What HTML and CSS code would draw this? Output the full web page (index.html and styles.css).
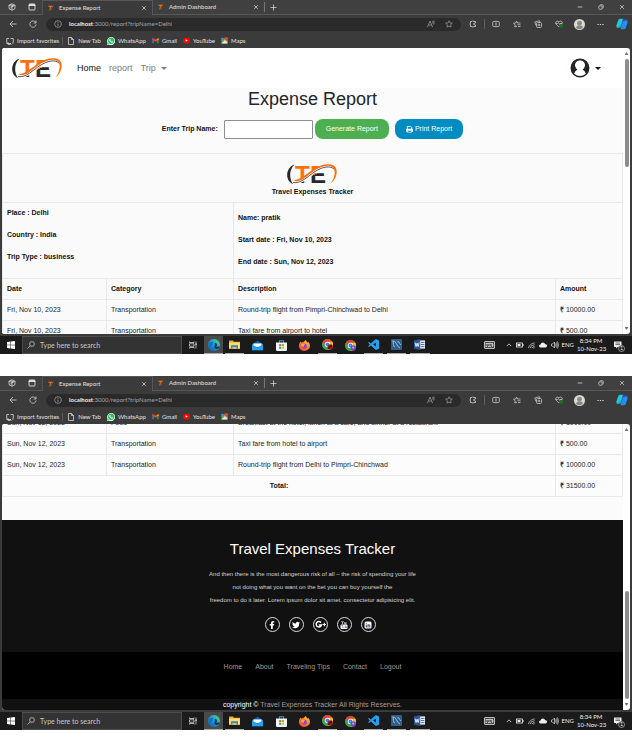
FILE: index.html
```html
<!DOCTYPE html>
<html lang="en">
<head>
<meta charset="utf-8">
<meta name="viewport" content="width=device-width, initial-scale=1">
<title>Expense Report</title>
<link rel="stylesheet" href="styles.css">
</head>
<body>
<svg class="sprite" aria-hidden="true">
  <defs>
    <linearGradient id="te-fill" gradientUnits="userSpaceOnUse" x1="22" y1="0" x2="32" y2="21"><stop offset=".56" stop-color="#ff6f0f"/><stop offset=".56" stop-color="#26282c"/></linearGradient>
    <linearGradient id="edge-fill" x1="0" y1="1" x2="1" y2="0"><stop offset="0" stop-color="#0c59a4"/><stop offset=".5" stop-color="#1b9de2"/><stop offset="1" stop-color="#5fe05a"/></linearGradient>
    <linearGradient id="copilot-fill" x1="0" y1="0" x2="1" y2="1"><stop offset="0" stop-color="#1fa3ff"/><stop offset=".5" stop-color="#22d3c5"/><stop offset="1" stop-color="#2b62f0"/></linearGradient>
    <linearGradient id="fox-fill" x1="0" y1="1" x2="1" y2="0"><stop offset="0" stop-color="#ff3647"/><stop offset=".5" stop-color="#ff7a1e"/><stop offset="1" stop-color="#ffe14a"/></linearGradient>
  </defs>
  <symbol id="logo" viewBox="0 0 51 22">
    <text class="logo-type" x="8" y="20" fill="url(#te-fill)">T</text>
    <text class="logo-type" x="23" y="20" fill="url(#te-fill)">E</text>
    <path d="M5 19C14 22 21 13 28 8.500C36 3.500 43 2.500 47 6" fill="none" stroke="#fff" stroke-width="2.500"/>
    <path d="M7.500 1.500C-2 5-2 18 6 21C2 15 2 7 7.500 1.500Z" fill="#26282c"/>
    <path d="M6 19.500C14 21 21 13 28 8.500C36 3.500 43 2.500 47 6" fill="none" stroke="#26282c" stroke-width=".8"/>
    <path d="M6 17C12 18 19 11 26 6.500C36 0 48-1 49.500 7C50.500 13 47 18 43.500 20.500C47 16 49.500 9 46 4.500C40 0 30 5 24 10C16 17 10 20 6 17Z" fill="#ff6f0f"/>
  </symbol>
  <symbol id="favicon" viewBox="0 0 12 12"><path d="M1 1.500h9L8.500 4H6L4.500 11H2.500L4 4H1Z" fill="#f07018"/><path d="M7 5l4-3-1 3-2 1v4H6Z" fill="#8a4a20"/></symbol>
  <symbol id="workspaces" viewBox="0 0 16 16"><path d="M8 1.500l6 2.800v7L8 14.500l-6-3.200v-7ZM2 4.300L8 7l6-2.700M8 7v7.500M5 3l6 2.700M5 10l6-5" fill="none" stroke="currentColor" stroke-width="1.500"/></symbol>
  <symbol id="tabs" viewBox="0 0 16 16"><rect x="2" y="2" width="12" height="12" rx="2" fill="none" stroke="currentColor" stroke-width="1.800"/><path d="M2 2h12v4H2Z" fill="currentColor"/></symbol>
  <symbol id="close" viewBox="0 0 16 16"><path d="M3 3l10 10M13 3L3 13" stroke="currentColor" stroke-width="1.800"/></symbol>
  <symbol id="plus" viewBox="0 0 16 16"><path d="M8 1v14M1 8h14" stroke="currentColor" stroke-width="1.600"/></symbol>
  <symbol id="minimize" viewBox="0 0 16 16"><path d="M2 8h12" stroke="currentColor" stroke-width="2"/></symbol>
  <symbol id="restore" viewBox="0 0 16 16"><rect x="2" y="5" width="9" height="9" rx="2" fill="none" stroke="currentColor" stroke-width="1.800"/><path d="M5 4q0-2 2-2h5q2 0 2 2v5q0 2-2 2" fill="none" stroke="currentColor" stroke-width="1.800"/></symbol>
  <symbol id="back" viewBox="0 0 16 16"><path d="M15 8H2M8 2L2 8l6 6" fill="none" stroke="currentColor" stroke-width="1.600"/></symbol>
  <symbol id="reload" viewBox="0 0 16 16"><path d="M13.500 5A6.300 6.300 0 1 0 14.300 9M14 1v5H9" fill="none" stroke="currentColor" stroke-width="1.600"/></symbol>
  <symbol id="info" viewBox="0 0 16 16"><circle cx="8" cy="8" r="6.700" fill="none" stroke="currentColor" stroke-width="1.400"/><path d="M8 7v5M8 4v1.600" stroke="currentColor" stroke-width="1.600"/></symbol>
  <symbol id="read-aloud" viewBox="0 0 16 16"><path d="M1 14L6 2l5 12M3 10h6M11 2q2 2 0 5M13 1q3 4 0 8" fill="none" stroke="currentColor" stroke-width="1.400"/></symbol>
  <symbol id="star" viewBox="0 0 16 16"><path d="M8 1.500l2 4.300 4.700.6-3.500 3.200.9 4.700L8 12l-4.100 2.300.9-4.700L1.300 6.400 6 5.800Z" fill="none" stroke="currentColor" stroke-width="1.400"/></symbol>
  <symbol id="puzzle" viewBox="0 0 16 16"><path d="M3 3h3q1-3 4 0h3v3q-4 0-4 2t4 2v3h-3q-2 3-4 0H3v-3q-3-2 0-4Z" fill="none" stroke="currentColor" stroke-width="1.600"/></symbol>
  <symbol id="split" viewBox="0 0 16 16"><path d="M7 3H3q-1.500 0-1.500 1.500v7Q1.500 13 3 13h4M9 3h4q1.500 0 1.500 1.500v7Q14.500 13 13 13H9M8 1v14" fill="none" stroke="currentColor" stroke-width="1.500"/></symbol>
  <symbol id="favorites" viewBox="0 0 16 16"><path d="M15 6H9L7 2 5.500 6 1 6.500 4.500 9.500 3.500 14 8 12M9 9.500h6M10 13h5" fill="none" stroke="currentColor" stroke-width="1.500"/></symbol>
  <symbol id="collections" viewBox="0 0 16 16"><path d="M4 11L1.500 4 11 1.500l1 3" fill="none" stroke="currentColor" stroke-width="1.500"/><rect x="5" y="5" width="10" height="10" rx="2" fill="none" stroke="currentColor" stroke-width="1.500"/><path d="M10 7v6M7 10h6" stroke="currentColor" stroke-width="1.500"/></symbol>
  <symbol id="heart" viewBox="0 0 16 16"><path d="M8 14L2 8Q0 3 4 2q3 0 4 2 1-2 4-2 4 1 2 6ZM1 7h4l2-2 2 4 1-2h4" fill="none" stroke="currentColor" stroke-width="1.400"/><circle cx="12" cy="12" r="4" fill="#12751c"/></symbol>
  <symbol id="profile" viewBox="0 0 16 16"><circle cx="8" cy="8" r="8" fill="#dcdad7"/><circle cx="8" cy="6" r="3.500" fill="#8b8985"/><path d="M3 13q0-4 5-4t5 4q-5 4-10 0Z" fill="#8b8985"/></symbol>
  <symbol id="more" viewBox="0 0 16 16"><path d="M1 8h3M6.500 8h3M12 8h3" stroke="currentColor" stroke-width="2.400"/></symbol>
  <symbol id="copilot" viewBox="0 0 16 16"><path d="M5 1h4q1 0 .6 1.500L7 11q-.6 2-3 2H2Q0 13 .5 10L3 3q.6-2 2-2Z" fill="url(#copilot-fill)"/><path d="M12 3h2q2 0 1.500 3L13 13q-.6 2-2 2H7q-1 0-.6-1.500L9 5q.6-2 3-2Z" fill="#258df5"/><path d="M9 1h2q1.500 0 2 2h-1Q10 3 9 5L7 11Z" fill="#2447c9"/></symbol>
  <symbol id="import" viewBox="0 0 16 16"><path d="M6 3H1.500v10H9M9 3h5.500v8M4 10v5h5M8 12l3 3M12 12h3" fill="none" stroke="currentColor" stroke-width="1.500"/></symbol>
  <symbol id="page" viewBox="0 0 16 16"><path d="M3 1h6l4 4v10H3ZM9 1v4h4" fill="none" stroke="currentColor" stroke-width="1.500"/></symbol>
  <symbol id="whatsapp" viewBox="0 0 16 16"><path d="M0 16l1.200-4.200A8 8 0 1 1 4 14.800Z" fill="#fff"/><path d="M2 14l1-3A6.500 6.500 0 1 1 5 13Z" fill="#22c15c"/><path d="M5 4.500l1.500-.5L7.500 6.500l-.8.9q.8 1.500 2.200 2l1-1L12 9.500q0 2-2 2Q5.500 11 4.500 6.500Z" fill="#fff"/></symbol>
  <symbol id="gmail" viewBox="0 0 16 16"><path d="M1 3v11h3V6Z" fill="#4285f4"/><path d="M15 3v11h-3V6Z" fill="#34a853"/><path d="M1 3l2-1 5 4 5-4 2 1v3L8 11 1 6Z" fill="#ea4335"/><path d="M12 5l3-2v3l-3 2Z" fill="#fbbc04"/></symbol>
  <symbol id="youtube" viewBox="0 0 16 16"><rect y="2" width="16" height="12" rx="4" fill="#f00"/><path d="M6 5l5 3-5 3Z" fill="#fff"/></symbol>
  <symbol id="maps" viewBox="0 0 16 16"><path d="M1 2h14v13H1Z" fill="#34a853"/><path d="M1 15L13 3l2 12Z" fill="#dfe6ec"/><path d="M1 2h7L1 9Z" fill="#4285f4"/><path d="M2 13L12 3" stroke="#fbc21b" stroke-width="2"/><path d="M12 10Q8 6 8 4a4 4 0 0 1 8 0q0 2-4 6Z" fill="#ea4335"/></symbol>
  <symbol id="account" viewBox="0 0 20 20"><circle cx="10" cy="10" r="8.800" fill="#fff" stroke="#212529" stroke-width="1.400"/><path d="M4 16A8.800 8.800 0 1 1 16 16Q15 12.500 12.500 11.500A5 5 0 1 0 7.500 11.500Q5 12.500 4 16Z" fill="#212529"/><circle cx="10" cy="8" r="4" fill="#fff"/></symbol>
  <symbol id="printer" viewBox="0 0 16 16"><path d="M3 7V1h8l2 2v4" fill="none" stroke="currentColor" stroke-width="2"/><path d="M2 6h12q2 0 2 2v5h-3v-2H3v2H0V8q0-2 2-2Z" fill="currentColor"/><path d="M3.500 10.500v4h9v-4" fill="none" stroke="currentColor" stroke-width="1.500"/></symbol>
  <symbol id="windows" viewBox="0 0 16 16"><path d="M0 2l7-1v6.500H0ZM8 1l8-1v7.500H8ZM0 8.500h7V15l-7-1ZM8 8.500h8V16l-8-1Z" fill="#fff"/></symbol>
  <symbol id="search" viewBox="0 0 16 16"><circle cx="10" cy="6" r="4.800" fill="none" stroke="currentColor" stroke-width="1.500"/><path d="M6.500 9.500L1 15" stroke="currentColor" stroke-width="1.500"/></symbol>
  <symbol id="task-view" viewBox="0 0 16 16"><path d="M1 1v2h9V1M1 15v-2h9v2M1 5.500h9v5H1ZM14 1v14" fill="none" stroke="currentColor" stroke-width="1.400"/><path d="M13 5h2v3h-2Z" fill="currentColor"/></symbol>
  <symbol id="edge" viewBox="0 0 16 16"><circle cx="8" cy="8" r="8" fill="url(#edge-fill)"/><path d="M1 6Q4 2 8 4.500 5 6 5.500 10q1 4 6 5.200Q7 17 3 14-1 10 1 6Z" fill="#1173c7"/><path d="M9 8q1-1.500 0-3 3 0 3 3 0 1-1 2 3 1 5-1-1 4-4 4.500Q7 13 9 8Z" fill="#15334c"/></symbol>
  <symbol id="folder" viewBox="0 0 16 16"><path d="M0 2h6l1 2h9v10H0Z" fill="#e9a820"/><path d="M0 5h16v9H0Z" fill="#ffdc69"/><path d="M3 9h10v5h-2v-2H5v2H3Z" fill="#2f83cf"/></symbol>
  <symbol id="mail" viewBox="0 0 16 16"><path d="M0 6l8-5 8 5v9H0Z" fill="#0f62b5"/><path d="M2 5h12v5H2Z" fill="#fff"/><path d="M0 6l8 5 8-5v9H0Z" fill="#25a3ee"/></symbol>
  <symbol id="store" viewBox="0 0 16 16"><path d="M5 4V1h6v3" fill="none" stroke="#33a9e8" stroke-width="1.500"/><path d="M0 3.500h16V14q0 2-2 2H2q-2 0-2-2Z" fill="#f6f6f6"/><path d="M4.500 6h3v3h-3Z" fill="#f25022"/><path d="M8.500 6h3v3h-3Z" fill="#7fba00"/><path d="M4.500 10h3v3h-3Z" fill="#00a4ef"/><path d="M8.500 10h3v3h-3Z" fill="#ffb900"/></symbol>
  <symbol id="firefox" viewBox="0 0 16 16"><path d="M1 4l1-2 2 2q1-1 2.500-1L10 0q1 3 3 4l1-1q3 5 1 9-3 4-7 4-6 0-8-6-.5-3 1-6Z" fill="url(#fox-fill)"/><circle cx="8" cy="9" r="3.500" fill="#8d40dd"/><path d="M3 6q3-2 6 1-3 0-2 2.500Q3 11 3 6Z" fill="#ffac2f"/></symbol>
  <symbol id="chrome" viewBox="0 0 16 16"><circle cx="8" cy="8" r="8" fill="#34a853"/><path d="M1.100 4A8 8 0 0 1 15 4H8L5 10Z" fill="#ea4335"/><path d="M15 4A8 8 0 0 1 8 16l3.500-6L8 4Z" fill="#fbbc05"/><circle cx="8" cy="8" r="4" fill="#fff"/><circle cx="8" cy="8" r="3" fill="#4285f4"/></symbol>
  <symbol id="chrome-red" viewBox="0 0 16 16"><use href="#chrome"/><circle cx="12" cy="11.500" r="4" fill="#a01c20"/><path d="M9 14l5-5" stroke="#3d0d0d" stroke-width="2"/></symbol>
  <symbol id="chrome-purple" viewBox="0 0 16 16"><use href="#chrome"/><circle cx="12" cy="11.500" r="4" fill="#7549b9"/><circle cx="12" cy="11" r="1.500" fill="#c9b4ee"/></symbol>
  <symbol id="vscode" viewBox="0 0 16 16"><path d="M11.500 0L16 2v12l-4.500 2L4 9.500 1.500 11.500 0 10.500 2.800 8 0 5.500 1.500 4.500 4 6.500ZM11.500 5L7.500 8l4 3Z" fill="#23a0ee"/></symbol>
  <symbol id="workbench" viewBox="0 0 16 16"><rect width="16" height="16" rx="1" fill="#2d5f8c"/><path d="M2 3q4-1 6 4t5 6M3 3q0 5 2 9M9 4q3-1 4 3l2 2" fill="none" stroke="#b5cfe4" stroke-width="1.200"/></symbol>
  <symbol id="word" viewBox="0 0 16 16"><path d="M8 2h8v12H8Z" fill="#e9eef8"/><path d="M10 5h5M10 8h5M10 11h5" stroke="#2b579a" stroke-width="1.200"/><path d="M0 2l9-2v16l-9-2Z" fill="#2b579a"/><path d="M1.500 5L3 11l1.500-5L6 11l1.500-6" fill="none" stroke="#fff" stroke-width="1.200"/></symbol>
  <symbol id="keyboard" viewBox="0 0 22 16"><rect x="1" y="1" width="20" height="14" rx="1" fill="#4a4a4a" stroke="#ddd" stroke-width="1.600"/><path d="M3 5h13M3 8h4M9 8h4M3 11h3M8 11h6M17 4v8M15 8h4" stroke="#ddd" stroke-width="1.600"/></symbol>
  <symbol id="chevron" viewBox="0 0 16 16"><path d="M2 11l6-6 6 6" fill="none" stroke="currentColor" stroke-width="2"/></symbol>
  <symbol id="battery" viewBox="0 0 16 16"><rect x="1" y="4" width="12" height="8" fill="none" stroke="currentColor" stroke-width="1.600"/><path d="M3 6h6v4H3ZM13 6h2v4h-2Z" fill="currentColor"/></symbol>
  <symbol id="wifi" viewBox="0 0 16 16"><path d="M1 14Q3 4 15 2M5 14q1-7 10-8M9 14q1-3 6-4M12 14l3-1" fill="none" stroke="currentColor" stroke-width="1.500"/></symbol>
  <symbol id="cloud" viewBox="0 0 16 16"><path d="M3 13q-3-.5-3-3t3-3q1-4 5-4 3.500 0 4 3 4 0 4 3.500Q16 13 13 13Z" fill="currentColor"/></symbol>
  <symbol id="sound" viewBox="0 0 16 16"><path d="M1 6h2l4-4v12l-4-4H1ZM9 5q2 3 0 6M11 3q3 5 0 10M13 1q4 7 0 14" fill="none" stroke="currentColor" stroke-width="1.300"/></symbol>
  <symbol id="notice" viewBox="0 0 16 16"><path d="M0 1h15v11H7l-3 3v-3H0Z" fill="currentColor"/><path d="M3 4h9M3 7h9" stroke="#222" stroke-width="1.200"/></symbol>
  <symbol id="facebook" viewBox="0 0 16 16"><path d="M9.500 16V9H12l.4-3H9.500V4.500q0-1.500 1.500-1.500h1.500V.3Q6 -1 6 4v2H3.500v3H6v7Z" fill="currentColor"/></symbol>
  <symbol id="twitter" viewBox="0 0 16 16"><path d="M16 3.500l-1.600 1.600Q14.500 13 7 14.500q-4 .5-7-1.500 3 0 4.700-1.400Q2.500 11 1.700 9.200h1.400Q.7 8 .6 5.700l1.400.5Q0 4 1.200 1.800 4 5 7.900 5.200 7.500 2 11 1.500q1.500 0 2.400 1L15.400 1.800 14 3.700Z" fill="currentColor"/></symbol>
  <symbol id="google-plus" viewBox="0 0 20 16"><path d="M11 4.200A5 5 0 1 0 12 9H7" fill="none" stroke="currentColor" stroke-width="2.600"/><path d="M17 5v6M14 8h6" stroke="currentColor" stroke-width="2"/></symbol>
  <symbol id="tube" viewBox="0 0 16 16"><path d="M3 0l2 3.500V6M7 0L5 3.500M9 2.500v3M12 2v4q-3 1-2-1" fill="none" stroke="currentColor" stroke-width="1.400"/><rect x="1" y="7" width="14" height="9" rx="2" fill="currentColor"/><path d="M3 9h3M4.500 9v5M8 10v4M11 9v5h2v-3h-2" fill="none" stroke="#45536d" stroke-width="1"/></symbol>
  <symbol id="linkedin" viewBox="0 0 16 16"><rect x="1" y="1" width="14" height="14" rx="3" fill="currentColor"/><path d="M4.500 7v6M4.500 3.500v2M8 13V7M8 9q0-1.500 1.800-1.500T11.500 9v4" fill="none" stroke="#16365c" stroke-width="1.800"/></symbol>
</svg>

<main>
<section class="desktop">
  <header class="browser">
    <div class="tabs">
      <button class="tab-tool" aria-label="Workspaces"><svg class="ico-8"><use href="#workspaces"/></svg></button>
      <button class="tab-tool" aria-label="Tab actions"><svg class="ico-8"><use href="#tabs"/></svg></button>
      <div class="tab active"><svg class="ico-6"><use href="#favicon"/></svg><span>Expense Report</span><button aria-label="Close tab"><svg class="ico-6"><use href="#close"/></svg></button></div>
      <div class="tab"><svg class="ico-6"><use href="#favicon"/></svg><span>Admin Dashboard</span><button aria-label="Close tab"><svg class="ico-6"><use href="#close"/></svg></button></div>
      <button class="new-tab" aria-label="New tab"><svg class="ico-7"><use href="#plus"/></svg></button>
      <div class="window-controls"><button aria-label="Minimize"><svg class="ico-6"><use href="#minimize"/></svg></button><button aria-label="Restore"><svg class="ico-6"><use href="#restore"/></svg></button><button aria-label="Close"><svg class="ico-6"><use href="#close"/></svg></button></div>
    </div>
    <div class="toolbar">
      <button class="nav-tool" aria-label="Back"><svg class="ico-8"><use href="#back"/></svg></button>
      <button class="nav-tool" aria-label="Refresh"><svg class="ico-8"><use href="#reload"/></svg></button>
      <div class="address"><svg class="ico-8"><use href="#info"/></svg><span class="url"><b>localhost</b>:3000/report?tripName=Delhi</span><svg class="ico-8"><use href="#read-aloud"/></svg><svg class="ico-8"><use href="#star"/></svg></div>
      <button class="tool divided" aria-label="Extensions"><svg class="ico-8"><use href="#puzzle"/></svg></button>
      <button class="tool" aria-label="Split screen"><svg class="ico-8"><use href="#split"/></svg></button>
      <button class="tool" aria-label="Favorites"><svg class="ico-8"><use href="#favorites"/></svg></button>
      <button class="tool" aria-label="Collections"><svg class="ico-8"><use href="#collections"/></svg></button>
      <button class="tool" aria-label="Browser essentials"><svg class="ico-8"><use href="#heart"/></svg></button>
      <button class="tool" aria-label="Profile"><svg class="ico-11"><use href="#profile"/></svg></button>
      <button class="tool" aria-label="Settings and more"><svg class="ico-7"><use href="#more"/></svg></button>
      <button class="tool" aria-label="Copilot"><svg class="ico-12"><use href="#copilot"/></svg></button>
    </div>
    <nav class="bookmarks">
      <a class="divided" href="#"><svg class="ico-8"><use href="#import"/></svg>Import favorites</a>
      <a href="#"><svg class="ico-8"><use href="#page"/></svg>New Tab</a>
      <a href="#"><svg class="ico-8"><use href="#whatsapp"/></svg>WhatsApp</a>
      <a href="#"><svg class="ico-7"><use href="#gmail"/></svg>Gmail</a>
      <a href="#"><svg class="ico-7"><use href="#youtube"/></svg>YouTube</a>
      <a href="#"><svg class="ico-7"><use href="#maps"/></svg>Maps</a>
    </nav>
  </header>
  <div class="window">
    <div class="page">
      <nav class="navbar">
        <a href="#"><svg class="logo" role="img" aria-label="TE"><use href="#logo"/></svg></a>
        <a class="current" href="#">Home</a>
        <a href="#">report</a>
        <a class="caret" href="#">Trip</a>
        <button class="account caret" aria-label="Account"><svg><use href="#account"/></svg></button>
      </nav>
      <h1>Expense Report</h1>
      <form class="trip-form">
        <label for="trip">Enter Trip Name:</label>
        <input id="trip" type="text">
        <button class="generate" type="button">Generate Report</button>
        <button class="print" type="button"><svg class="ico-7"><use href="#printer"/></svg>Print Report</button>
      </form>
      <table class="report">
        <colgroup><col class="c-date"><col class="c-cat"><col><col class="c-amt"></colgroup>
        <tbody>
        <tr><th class="brand" colspan="4"><svg class="logo" role="img" aria-label="TE"><use href="#logo"/></svg><div>Travel Expenses Tracker</div></th></tr>
        <tr class="details"><th colspan="2"><p>Place : Delhi</p><p>Country : India</p><p>Trip Type : business</p></th><th class="dates" colspan="2"><p>Name: pratik</p><p>Start date : Fri, Nov 10, 2023</p><p>End date : Sun, Nov 12, 2023</p></th></tr>
        <tr><th>Date</th><th>Category</th><th>Description</th><th>Amount</th></tr>
        <tr><td>Fri, Nov 10, 2023</td><td>Transportation</td><td>Round-trip flight from Pimpri-Chinchwad to Delhi</td><td><b>₹</b> 10000.00</td></tr>
        <tr><td>Fri, Nov 10, 2023</td><td>Transportation</td><td>Taxi fare from airport to hotel</td><td><b>₹</b> 500.00</td></tr>
        </tbody>
      </table>
    </div>
    <div class="scrollbar"><i class="up"></i><div class="track"><div class="thumb"></div></div><i class="down"></i></div>
  </div>
  <footer class="taskbar">
    <button class="start" aria-label="Start"><svg class="ico-8"><use href="#windows"/></svg></button>
    <label class="search"><svg class="ico-8"><use href="#search"/></svg><input type="text" aria-label="Search" placeholder="Type here to search"></label>
    <button class="start" aria-label="Task view"><svg class="ico-8"><use href="#task-view"/></svg></button>
    <div class="apps">
      <button class="open focused" aria-label="Edge"><svg class="ico-12"><use href="#edge"/></svg></button>
      <button class="open" aria-label="File Explorer"><svg class="ico-11"><use href="#folder"/></svg></button>
      <button aria-label="Mail"><svg class="ico-11"><use href="#mail"/></svg></button>
      <button aria-label="Store"><svg class="ico-11"><use href="#store"/></svg></button>
      <button aria-label="Firefox"><svg class="ico-11"><use href="#firefox"/></svg></button>
      <button class="open" aria-label="Chrome"><svg class="ico-11"><use href="#chrome-red"/></svg></button>
      <button aria-label="Chrome"><svg class="ico-11"><use href="#chrome-purple"/></svg></button>
      <button class="open" aria-label="VS Code"><svg class="ico-11"><use href="#vscode"/></svg></button>
      <button class="open" aria-label="Workbench"><svg class="ico-11"><use href="#workbench"/></svg></button>
      <button class="open" aria-label="Word"><svg class="ico-11"><use href="#word"/></svg></button>
    </div>
    <div class="tray">
      <svg class="keys"><use href="#keyboard"/></svg>
      <div class="status"><svg class="ico-6"><use href="#chevron"/></svg><svg class="ico-8"><use href="#battery"/></svg><svg class="ico-7"><use href="#wifi"/></svg><svg class="ico-8"><use href="#cloud"/></svg><svg class="ico-8"><use href="#sound"/></svg></div>
      <span>ENG</span>
      <time>8:34 PM<br>10-Nov-23</time>
      <button class="notice" aria-label="Notifications"><svg class="ico-8"><use href="#notice"/></svg><span class="badge">1</span></button>
    </div>
  </footer>
</section>

<section class="desktop">
  <header class="browser">
    <div class="tabs">
      <button class="tab-tool" aria-label="Workspaces"><svg class="ico-8"><use href="#workspaces"/></svg></button>
      <button class="tab-tool" aria-label="Tab actions"><svg class="ico-8"><use href="#tabs"/></svg></button>
      <div class="tab active"><svg class="ico-6"><use href="#favicon"/></svg><span>Expense Report</span><button aria-label="Close tab"><svg class="ico-6"><use href="#close"/></svg></button></div>
      <div class="tab"><svg class="ico-6"><use href="#favicon"/></svg><span>Admin Dashboard</span><button aria-label="Close tab"><svg class="ico-6"><use href="#close"/></svg></button></div>
      <button class="new-tab" aria-label="New tab"><svg class="ico-7"><use href="#plus"/></svg></button>
      <div class="window-controls"><button aria-label="Minimize"><svg class="ico-6"><use href="#minimize"/></svg></button><button aria-label="Restore"><svg class="ico-6"><use href="#restore"/></svg></button><button aria-label="Close"><svg class="ico-6"><use href="#close"/></svg></button></div>
    </div>
    <div class="toolbar">
      <button class="nav-tool" aria-label="Back"><svg class="ico-8"><use href="#back"/></svg></button>
      <button class="nav-tool" aria-label="Refresh"><svg class="ico-8"><use href="#reload"/></svg></button>
      <div class="address"><svg class="ico-8"><use href="#info"/></svg><span class="url"><b>localhost</b>:3000/report?tripName=Delhi</span><svg class="ico-8"><use href="#read-aloud"/></svg><svg class="ico-8"><use href="#star"/></svg></div>
      <button class="tool divided" aria-label="Extensions"><svg class="ico-8"><use href="#puzzle"/></svg></button>
      <button class="tool" aria-label="Split screen"><svg class="ico-8"><use href="#split"/></svg></button>
      <button class="tool" aria-label="Favorites"><svg class="ico-8"><use href="#favorites"/></svg></button>
      <button class="tool" aria-label="Collections"><svg class="ico-8"><use href="#collections"/></svg></button>
      <button class="tool" aria-label="Browser essentials"><svg class="ico-8"><use href="#heart"/></svg></button>
      <button class="tool" aria-label="Profile"><svg class="ico-11"><use href="#profile"/></svg></button>
      <button class="tool" aria-label="Settings and more"><svg class="ico-7"><use href="#more"/></svg></button>
      <button class="tool" aria-label="Copilot"><svg class="ico-12"><use href="#copilot"/></svg></button>
    </div>
    <nav class="bookmarks">
      <a class="divided" href="#"><svg class="ico-8"><use href="#import"/></svg>Import favorites</a>
      <a href="#"><svg class="ico-8"><use href="#page"/></svg>New Tab</a>
      <a href="#"><svg class="ico-8"><use href="#whatsapp"/></svg>WhatsApp</a>
      <a href="#"><svg class="ico-7"><use href="#gmail"/></svg>Gmail</a>
      <a href="#"><svg class="ico-7"><use href="#youtube"/></svg>YouTube</a>
      <a href="#"><svg class="ico-7"><use href="#maps"/></svg>Maps</a>
    </nav>
  </header>
  <div class="window">
    <div class="page scrolled">
      <table class="report">
        <colgroup><col class="c-date"><col class="c-cat"><col><col class="c-amt"></colgroup>
        <tbody>
        <tr><td>Sun, Nov 12, 2023</td><td>Food</td><td>Breakfast at the hotel, lunch at a cafe, and dinner at a restaurant</td><td><b>₹</b> 1000.00</td></tr>
        <tr><td>Sun, Nov 12, 2023</td><td>Transportation</td><td>Taxi fare from hotel to airport</td><td><b>₹</b> 500.00</td></tr>
        <tr><td>Sun, Nov 12, 2023</td><td>Transportation</td><td>Round-trip flight from Delhi to Pimpri-Chinchwad</td><td><b>₹</b> 10000.00</td></tr>
        <tr><th class="total" colspan="3">Total:</th><td><b>₹</b> 31500.00</td></tr>
        </tbody>
      </table>
      <div class="about">
        <h2>Travel Expenses Tracker</h2>
        <p>And then there is the most dangerous risk of all – the risk of spending your life<br>not doing what you want on the bet you can buy yourself the<br>freedom to do it later. Lorem ipsum dolor sit amet, consectetur adipisicing elit.</p>
        <div class="socials">
          <a href="#" aria-label="Facebook"><svg class="ico-8"><use href="#facebook"/></svg></a>
          <a href="#" aria-label="Twitter"><svg class="ico-8"><use href="#twitter"/></svg></a>
          <a href="#" aria-label="Google Plus"><svg class="ico-11"><use href="#google-plus"/></svg></a>
          <a href="#" aria-label="YouTube"><svg class="ico-8"><use href="#tube"/></svg></a>
          <a href="#" aria-label="LinkedIn"><svg class="ico-8"><use href="#linkedin"/></svg></a>
        </div>
      </div>
      <nav class="site-links"><a href="#">Home</a><a href="#">About</a><a href="#">Traveling Tips</a><a href="#">Contact</a><a href="#">Logout</a></nav>
      <p class="copyright">copyright © <a href="#">Travel Expenses Tracker All Rights Reserves.</a></p>
    </div>
    <div class="scrollbar at-end"><i class="up"></i><div class="track"><div class="thumb"></div></div><i class="down"></i></div>
  </div>
  <footer class="taskbar">
    <button class="start" aria-label="Start"><svg class="ico-8"><use href="#windows"/></svg></button>
    <label class="search"><svg class="ico-8"><use href="#search"/></svg><input type="text" aria-label="Search" placeholder="Type here to search"></label>
    <button class="start" aria-label="Task view"><svg class="ico-8"><use href="#task-view"/></svg></button>
    <div class="apps">
      <button class="open focused" aria-label="Edge"><svg class="ico-12"><use href="#edge"/></svg></button>
      <button class="open" aria-label="File Explorer"><svg class="ico-11"><use href="#folder"/></svg></button>
      <button aria-label="Mail"><svg class="ico-11"><use href="#mail"/></svg></button>
      <button aria-label="Store"><svg class="ico-11"><use href="#store"/></svg></button>
      <button aria-label="Firefox"><svg class="ico-11"><use href="#firefox"/></svg></button>
      <button class="open" aria-label="Chrome"><svg class="ico-11"><use href="#chrome-red"/></svg></button>
      <button aria-label="Chrome"><svg class="ico-11"><use href="#chrome-purple"/></svg></button>
      <button class="open" aria-label="VS Code"><svg class="ico-11"><use href="#vscode"/></svg></button>
      <button class="open" aria-label="Workbench"><svg class="ico-11"><use href="#workbench"/></svg></button>
      <button class="open" aria-label="Word"><svg class="ico-11"><use href="#word"/></svg></button>
    </div>
    <div class="tray">
      <svg class="keys"><use href="#keyboard"/></svg>
      <div class="status"><svg class="ico-6"><use href="#chevron"/></svg><svg class="ico-8"><use href="#battery"/></svg><svg class="ico-7"><use href="#wifi"/></svg><svg class="ico-8"><use href="#cloud"/></svg><svg class="ico-8"><use href="#sound"/></svg></div>
      <span>ENG</span>
      <time>8:34 PM<br>10-Nov-23</time>
      <button class="notice" aria-label="Notifications"><svg class="ico-8"><use href="#notice"/></svg><span class="badge">1</span></button>
    </div>
  </footer>
</section>
</main>
</body>
</html>
```
FILE: styles.css
```css
* { box-sizing: border-box; }
body { margin: 0; background: #fff; font-family: "Liberation Sans", Arial, sans-serif; font-size: 7px; line-height: 12px; color: #212529; }
main { display: grid; gap: 22px; }
h1, h2, p { margin: 0; font-weight: 400; }
a { color: inherit; text-decoration: none; }
button { display: flex; align-items: center; justify-content: center; margin: 0; padding: 0; border: 0; background: none; color: inherit; font: inherit; }
input { font: inherit; }
svg { display: block; flex: none; }
.sprite { position: absolute; width: 0; height: 0; }
.ico-6 { width: 6px; height: 6px; }
.ico-7 { width: 7px; height: 7px; }
.ico-8 { width: 8px; height: 8px; }
.ico-11 { width: 11px; height: 11px; }
.ico-12 { width: 12px; height: 12px; }
.logo { width: 51px; height: 22px; }
.logo-type { font: bold 24px "Liberation Sans", Arial, sans-serif; }

.desktop { display: flex; flex-direction: column; aspect-ratio: 632 / 354; overflow: hidden; background: #3b3b3b; }

/* Browser frame */
.browser { color: #e2e2e2; font-family: Lato, "Open Sans", sans-serif; font-size: 6px; }
.tabs { display: flex; height: 15px; border-bottom: 1px solid #575757; background: #404040; }
.tab-tool { width: 20px; }
.tab-tool:first-child { margin-left: 2px; }
.tab { display: flex; align-items: center; gap: 5px; width: 111px; padding: 0 5px; }
.tab.active { height: 15px; border: 1px solid #575757; border-bottom: 0; background: #3b3b3b; }
.tab span { flex: 1; }
.new-tab { width: 18px; height: 10px; margin: 2px 0; border-left: 1px solid #777; }
.window-controls { display: flex; margin-left: auto; }
.window-controls button { width: 21px; }
.toolbar { display: flex; align-items: center; height: 18px; color: #cfcfcf; }
.nav-tool { width: 20px; }
.nav-tool:first-child { margin-left: 3px; }
.address { display: flex; flex: 1; align-items: center; gap: 10px; height: 13px; margin-left: 3px; padding: 0 8px; border-radius: 7px; background: #2a2a2a; color: #a5a5a5; }
.address .url { flex: 1; margin-left: -3px; font-size: 6px; }
.url b { color: #eee; }
.tool { width: 21px; height: 10px; }
.tool.divided { width: 24px; border-right: 1px solid #5c5c5c; }
.bookmarks { display: flex; align-items: center; gap: 6px; height: 15px; padding: 0 6px; }
.bookmarks a { display: flex; align-items: center; gap: 3px; line-height: 8px; }
.bookmarks .divided { padding-right: 3px; border-right: 1px solid #5c5c5c; margin-right: -2px; }

/* Page window */
.window { display: flex; flex: 1; min-height: 0; margin: 0 2px 2px; border-radius: 3px; overflow: hidden; background: #fff; }
.page { flex: 1; min-width: 0; overflow: hidden; background: #fbfbfb; }
.page.scrolled { display: flex; flex-direction: column; justify-content: flex-end; }
.scrollbar { display: flex; flex-direction: column; align-items: center; width: 7px; padding: 4px 0; }
.scrollbar i { width: 4px; height: 3px; background: #777; }
.scrollbar .up { clip-path: polygon(50% 0, 100% 100%, 0 100%); }
.scrollbar .down { clip-path: polygon(0 0, 100% 0, 50% 100%); }
.track { display: flex; flex: 1; flex-direction: column; margin: 4px 0; }
.at-end .track { justify-content: flex-end; }
.thumb { width: 4px; height: 41%; border-radius: 2px; background: #8c8c8c; }

.navbar { display: flex; align-items: center; height: 40px; padding: 0 22px 0 10px; background: #fff; color: #7c7c7c; font-size: 9px; }
.navbar a { margin-right: 8px; }
.navbar a:first-child { margin-right: 14px; }
.navbar .current { color: #111; }
.caret { display: flex; align-items: center; gap: 5px; }
.caret::after { content: ""; border: 3px solid transparent; border-top-color: currentColor; border-bottom: 0; }
.account { margin-left: auto; color: #111; }
.account svg { width: 20px; height: 20px; }

h1 { font-size: 18px; line-height: 22px; text-align: center; }
.trip-form { display: flex; align-items: center; justify-content: center; height: 20px; margin: 9px 0 14px; }
.trip-form label { margin-right: 6px; color: #111; font-weight: 700; }
.trip-form input { width: 89px; height: 19px; margin-right: 2px; padding: 1px 4px; border: 1px solid #8f8f8f; border-radius: 1px; background: #fff; }
.trip-form button { gap: 2px; height: 20px; padding: 0 11px; border-radius: 8px; color: #fff; }
.trip-form .generate { margin-right: 6px; background: #4caf50; }
.trip-form .print { background: #008cc0; }

.report { width: 100%; table-layout: fixed; border-collapse: collapse; background: #fafafa; }
.scrolled .report { flex: none; margin-bottom: 23px; background: #fcfcfc; }
.c-date { width: 104px; }
.c-cat { width: 127px; }
.c-amt { width: 67px; }
.report th, .report td { padding: 4px; border: 1px solid #e9e9e9; text-align: left; vertical-align: top; white-space: nowrap; }
.report th { color: #111; }
.report .total { text-align: center; }
.report .brand { padding-top: 9px; text-align: center; }
.brand .logo { margin: 0 auto 1px; }
.details p { margin-bottom: 10px; font-weight: 700; }
.report .dates { padding-top: 9px; padding-bottom: 0; }

.about { flex: none; padding: 19px 0 20px; background: #111; color: #fff; text-align: center; }
.about h2 { margin-bottom: 9px; font-size: 15px; line-height: 20px; }
.about p { color: #d5d5d5; font-size: 6px; line-height: 13px; }
.socials { display: flex; justify-content: center; gap: 9px; margin-top: 10px; padding-left: 15px; }
.socials a { display: flex; align-items: center; justify-content: center; width: 15px; height: 15px; border: 1px solid #ddd; border-radius: 50%; }
.site-links { display: flex; flex: none; justify-content: center; gap: 13px; padding: 9px 0 26px; background: #000; color: #a8958c; }
.copyright { flex: none; background: #111; color: #fff; line-height: 11px; text-align: center; }
.copyright a { color: #a09a96; }

/* Taskbar */
.taskbar { display: flex; height: 18px; background: #1b1b1b; color: #eee; font-family: Lato, "Open Sans", sans-serif; }
.start { width: 22px; }
.search { display: flex; align-items: center; gap: 5px; width: 160px; padding: 0 4px; border: 1px solid #4c4c4c; background: #333; color: #ccc; }
.search input { flex: 1; min-width: 0; padding: 0; border: 0; background: none; color: inherit; }
.search input::placeholder { color: #c8c8c8; opacity: 1; }
.apps { display: flex; width: 36%; }
.apps button { flex: 1; margin: 0 2px; }
.apps .open { border-bottom: 1px solid #aaa; }
.apps .focused { margin: 0; background: #494949; }
.tray { display: flex; align-items: center; justify-content: flex-end; flex: 1; gap: 3px; padding-right: 7px; font-size: 6px; line-height: 8px; }
.keys { width: 11px; height: 8px; }
.status { display: flex; align-items: center; justify-content: space-between; width: 53px; margin-left: 8px; }
.tray time { width: 28px; text-align: center; white-space: nowrap; }
.notice { position: relative; width: 14px; height: 14px; margin-left: 3px; }
.badge { position: absolute; right: 0; bottom: 0; width: 7px; height: 7px; border: 1px solid #999; border-radius: 50%; background: #1b1b1b; font-size: 5px; line-height: 5px; }
```
